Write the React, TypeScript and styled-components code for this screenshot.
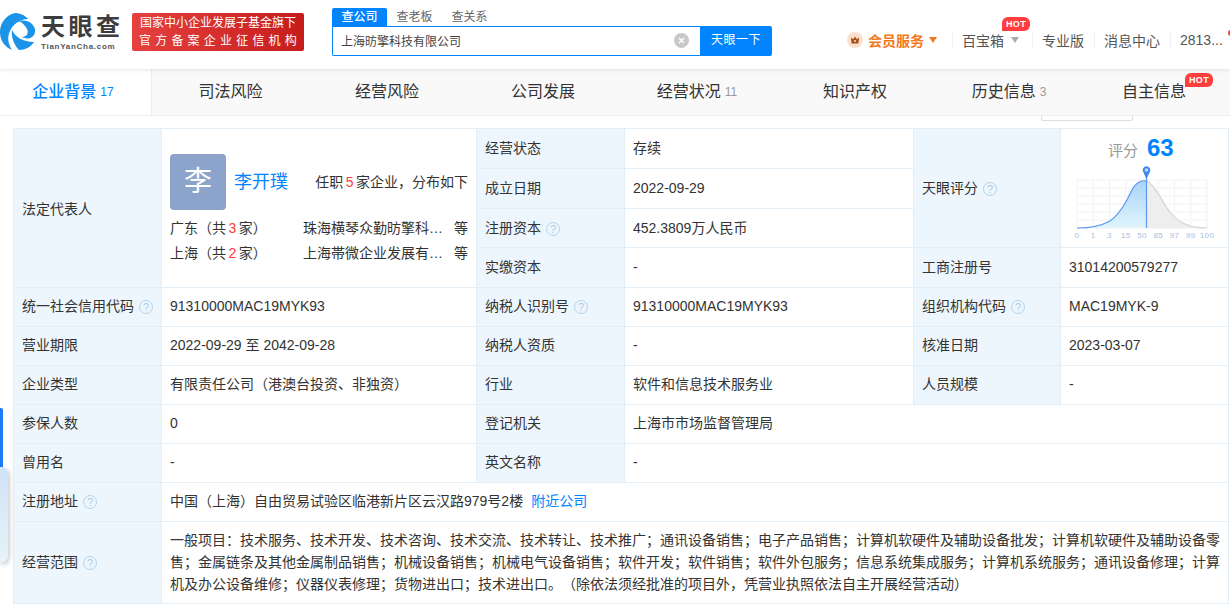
import React from 'react';
import styled, { createGlobalStyle } from 'styled-components';

const GlobalStyle = createGlobalStyle`
  html, body {
    margin: 0;
    padding: 0;
    height: 607px;
    overflow: hidden;
    background: #fff;
    color: #333;
    font-family: "Liberation Sans", "Noto Sans CJK SC", sans-serif;
    font-size: 14px;
    text-spacing-trim: space-all;
  }
`;

const Page = styled.div`
  position: relative;
  width: 1230px;
  height: 607px;
  overflow: hidden;
`;

const Header = styled.header`
  position: relative;
  z-index: 2;
  display: flex;
  align-items: flex-start;
  height: 69px;
  background: #fff;
  box-shadow: 0 1px 4px rgba(0, 0, 0, 0.1);
`;

const LogoBox = styled.div`
  display: flex;
  width: 132px;
  padding-top: 13px;
  flex: none;
`;

const LogoWords = styled.div`
  display: flex;
  flex-direction: column;
  margin-left: 5px;
`;

const LogoName = styled.div`
  font-size: 24px;
  line-height: 24px;
  height: 24px;
  margin-top: 2px;
  font-weight: 700;
  letter-spacing: 3.5px;
  color: #3d3d3d;
  white-space: nowrap;
`;

const LogoSub = styled.div`
  font-size: 8px;
  line-height: 11px;
  margin-top: 2px;
  font-weight: 700;
  letter-spacing: 0.72px;
  color: #555;
  white-space: nowrap;
`;

const Banner = styled.div`
  flex: none;
  width: 172px;
  height: 38px;
  margin-top: 13px;
  border-radius: 2px;
  background: linear-gradient(90deg, #e4413f, #c61c1c);
  color: #fff;
  display: flex;
  flex-direction: column;
  align-items: center;
  justify-content: center;
  font-size: 12px;
  line-height: 18px;
  white-space: nowrap;
`;

const BannerWide = styled.span`
  letter-spacing: 4.2px;
  margin-right: -4px;
`;

const SearchArea = styled.div`
  flex: none;
  width: 440px;
  margin: 8px 0 0 28px;
`;

const SearchTabs = styled.div`
  display: flex;
  height: 18px;
`;

const SearchTab = styled.div<{ $active?: boolean }>`
  font-size: 12px;
  line-height: 18px;
  text-align: center;
  ${(p) =>
    p.$active
      ? 'width: 55px; background: #0084ff; color: #fff; border-radius: 2px 2px 0 0; font-weight: 500;'
      : 'width: 55px; color: #666;'}
`;

const SearchRow = styled.div`
  display: flex;
  height: 30px;
`;

const SearchInput = styled.div`
  flex: 1;
  box-sizing: border-box;
  display: flex;
  align-items: center;
  justify-content: space-between;
  padding: 0 11px 0 8px;
  border: 1px solid #0084ff;
  border-right: 0;
  border-radius: 0 0 0 2px;
  font-size: 12px;
  color: #444;
`;

const SearchText = styled.span`
  margin-top: -2px;
`;

const SearchButton = styled.div`
  width: 72px;
  background: #0084ff;
  color: #fff;
  font-size: 12px;
  letter-spacing: 0.5px;
  line-height: 29px;
  text-align: center;
  border-radius: 0 2px 2px 0;
`;

const UserNav = styled.nav`
  flex: 1;
  display: flex;
  align-items: center;
  height: 18px;
  margin: 31px 0 0 75px;
  font-size: 14px;
  color: #555;
  white-space: nowrap;
`;

const VipLink = styled.div`
  display: flex;
  align-items: center;
  color: #f57a1c;
  font-weight: 700;
  gap: 5px;
  margin-right: 5px;
`;

const NavItem = styled.div`
  position: relative;
  display: flex;
  align-items: center;
  gap: 7px;
`;

const BoxItem = styled(NavItem)`
  margin-right: 3px;
`;

const NavSep = styled.i`
  width: 1px;
  height: 14px;
  background: #eee;
  margin: 0 9.5px;
  flex: none;
`;

const Caret = styled.i<{ $color: string }>`
  width: 0;
  height: 0;
  border-left: 4.5px solid transparent;
  border-right: 4.5px solid transparent;
  border-top: 6px solid ${(p) => p.$color};
`;

const HotBadge = styled.span`
  position: absolute;
  width: 28px;
  height: 14px;
  background: #ff3d3d;
  color: #fff;
  font-size: 9px;
  font-weight: 700;
  line-height: 14px;
  text-align: center;
  border-radius: 6px 6px 6px 0;
  letter-spacing: 0.3px;
`;

const BoxHot = styled(HotBadge)`
  top: -13px;
  left: 40px;
`;

const TabHot = styled(HotBadge)`
  top: 4px;
  left: 104px;
`;

const RedDot = styled.i`
  position: absolute;
  top: -2px;
  left: 48px;
  width: 6px;
  height: 6px;
  border-radius: 50%;
  background: #f04040;
`;

const TabBar = styled.div`
  position: relative;
  z-index: 1;
  display: flex;
  height: 47px;
  box-sizing: border-box;
  background: #f9f9f9;
  border-bottom: 1px solid #eee;
  overflow: hidden;
`;

const Tab = styled.div<{ $w: number; $active?: boolean }>`
  position: relative;
  flex: none;
  box-sizing: border-box;
  width: ${(p) => p.$w}px;
  padding-bottom: 4px;
  display: flex;
  align-items: center;
  justify-content: center;
  gap: 4px;
  font-size: 16px;
  color: ${(p) => (p.$active ? '#0084ff' : '#333')};
  font-weight: ${(p) => (p.$active ? 500 : 400)};
  background: ${(p) => (p.$active ? '#fff' : 'transparent')};
  ${(p) => (p.$active ? 'border-right: 1px solid #eee; padding-right: 5px;' : '')}
`;

const TabCount = styled.span<{ $active?: boolean }>`
  font-size: 12px;
  font-weight: 400;
  margin-top: 3px;
  color: ${(p) => (p.$active ? '#0084ff' : '#999')};
`;

const PeekBox = styled.div`
  position: absolute;
  top: 100px;
  left: 1041px;
  width: 90px;
  height: 19px;
  background: #fff;
  border: 1px solid #ddd;
  border-radius: 2px;
`;

const SideBar = styled.div`
  position: absolute;
  left: 0;
  top: 408px;
  width: 3px;
  height: 62px;
  background: #1f7cf6;
  border-radius: 0 2px 2px 0;
`;

const SideCard = styled.div`
  position: absolute;
  left: 0;
  top: 467px;
  width: 8px;
  height: 95px;
  background: linear-gradient(180deg, #cfe3f7, #e6f3f8);
  border-radius: 0 6px 6px 0;
  box-shadow: 1px 2px 5px rgba(0, 0, 0, 0.25);
`;

const Table = styled.table`
  table-layout: fixed;
  border-collapse: collapse;
  width: 1215px;
  margin: 12px 0 0 13px;
  font-size: 14px;
  line-height: 22px;
  color: #333;
`;

const Row = styled.tr<{ $h?: number }>`
  height: ${(p) => p.$h ?? 39}px;
`;

const Label = styled.td<{ $pad?: string }>`
  box-sizing: border-box;
  padding: ${(p) => p.$pad ?? '0 8px 2px'};
  background: #eef6fd;
  border: 1px solid #e4eef7;
  white-space: nowrap;
`;

const Value = styled.td<{ $pad?: string }>`
  box-sizing: border-box;
  padding: ${(p) => p.$pad ?? '0 8px 2px'};
  background: #fff;
  border: 1px solid #e4eef7;
`;

const Help = styled.span`
  display: inline-block;
  box-sizing: border-box;
  width: 14px;
  height: 14px;
  margin-left: 5px;
  border: 1px solid #b3d4ee;
  border-radius: 50%;
  color: #a9cce9;
  font-size: 11px;
  line-height: 12px;
  text-align: center;
  vertical-align: 0;
`;

const PersonCell = styled(Value)`
  vertical-align: top;
  padding-top: 25px;
`;

const Person = styled.div`
  display: flex;
  align-items: center;
`;

const Avatar = styled.div`
  flex: none;
  width: 56px;
  height: 56px;
  border-radius: 4px;
  background: #8ca3cc;
  color: #fff;
  font-size: 28px;
  line-height: 56px;
  text-align: center;
`;

const PersonName = styled.span`
  margin-left: 8px;
  font-size: 18px;
  color: #0084ff;
  white-space: nowrap;
`;

const Positions = styled.span`
  margin-left: auto;
  white-space: nowrap;
`;

const Red = styled.em`
  font-style: normal;
  margin: 0 2.5px;
  color: #ff3b3b;
`;

const Regions = styled.div`
  margin-top: 6px;
`;

const Region = styled.div`
  display: grid;
  grid-template-columns: 133px 141px 1fr;
  height: 25px;
  line-height: 25px;
  white-space: nowrap;
`;

const Company = styled.span`
  overflow: hidden;
  text-overflow: ellipsis;
`;

const Etc = styled.span`
  text-align: right;
`;

const Link = styled.a`
  margin-left: 8px;
  color: #0084ff;
`;

const ScoreHead = styled.div`
  display: flex;
  align-items: baseline;
  gap: 9px;
  color: #999;
  font-size: 15px;
  height: 26px;
  line-height: 26px;
  padding-left: 35px;
`;

const ScoreNum = styled.span`
  color: #0084ff;
  font-size: 24px;
  font-weight: 700;
`;

const ChartCell = styled(Value)`
  padding: 0;
  vertical-align: top;
`;

const ChartWrap = styled.div`
  padding: 6px 0 0 12px;
`;

const ChartSvg = styled.svg`
  display: block;
  margin-top: 3px;
`;

const LogoMark = () => (
  <svg width="36" height="38" viewBox="0 0 36 38" style={{ flex: 'none' }}>
    <path d="M15 0C6 2 0 10 0 19c0 9 5 15 12 18-4-6-5-13-2-19 3-7 10-12 18-12-3-4-9-6-13-6z" fill="#1a93e8" />
    <path d="M18 8c8-2 15 1 17 8 1 7-5 12-13 8 5 0 7-4 5-8-2-4-5-7-9-8z" fill="#1a93e8" />
    <path d="M12 17c3 7 11 12 22 12-3 5-9 8-15 8-5-5-8-13-7-20z" fill="#1a93e8" />
  </svg>
);

const ClearIcon = () => (
  <svg width="15" height="15" viewBox="0 0 15 15" style={{ marginTop: -2 }}>
    <circle cx="7.5" cy="7.5" r="7.5" fill="#c8c8c8" />
    <path d="M5 5l5 5M10 5l-5 5" stroke="#fff" strokeWidth="1.4" />
  </svg>
);

const CrownIcon = () => (
  <svg width="16" height="16" viewBox="0 0 16 16">
    <circle cx="8" cy="8" r="8" fill="#fbe1cd" />
    <path d="M3.8 5.6l2.3 1.7L8 4.4l1.9 2.9 2.3-1.7-.8 6H4.600z" fill="#a5531b" />
    <circle cx="8" cy="9" r="1" fill="#fbe1cd" />
  </svg>
);

const curve = 'M0 48C12 48 24 46 33 41C41 36 46 27 50 20C54 12 57 3 65 1C67 0.5 68 0.7 69.500 1';
const curveRight = 'M69.500 1C74 2 77 8 81 13C85 19 88 27 93 32C97 37 101 41 106 43C113 47 122 48 130 48';

const ScoreChart = () => {
  const labels = ['0', '1', '3', '15', '50', '85', '97', '99', '100'];
  return (
    <ChartSvg width="150" height="74" viewBox="-4 -16 150 74">
      <defs>
        <linearGradient id="blueArea" x1="0" y1="0" x2="0" y2="1">
          <stop offset="0" stopColor="#a8d3f7" />
          <stop offset="1" stopColor="#e0f5fc" />
        </linearGradient>
      </defs>
      {[0, 8, 16, 24, 32, 40, 48].map((y) => (
        <line key={y} x1="0" x2="130" y1={y} y2={y} stroke="#f2f2f2" />
      ))}
      {labels.map((l, i) => (
        <line key={l} x1={i * 16.25} x2={i * 16.25} y1="0" y2="48" stroke="#f2f2f2" />
      ))}
      <path d={`${curveRight}L130 48L69.500 48Z`} fill="#eeeeee" />
      <path d={curveRight} fill="none" stroke="#d4d4d4" strokeWidth="1.2" />
      <path d={`${curve}L69.500 48L0 48Z`} fill="url(#blueArea)" />
      <path d={curve} fill="none" stroke="#5a98f2" strokeWidth="1.2" />
      <line x1="69.500" x2="69.500" y1="-6" y2="48" stroke="#5a98f2" strokeWidth="1.2" />
      <path d="M69.500 -1L66 -8.500A3.800 3.800 0 1 1 73 -8.500Z" fill="#3f87ee" />
      <circle cx="69.500" cy="-10" r="1.800" fill="#bcd8fa" />
      {labels.map((l, i) => (
        <text
          key={l}
          x={i * 16.25}
          y="58"
          fontSize="8"
          letterSpacing="0.4"
          textAnchor="middle"
          fill="#a9bde0"
          fontFamily='"Liberation Sans", sans-serif'
        >
          {l}
        </text>
      ))}
    </ChartSvg>
  );
};

const App = () => {
  return (
    <Page>
      <GlobalStyle />
      <Header>
        <LogoBox>
          <LogoMark />
          <LogoWords>
            <LogoName>天眼查</LogoName>
            <LogoSub>TianYanCha.com</LogoSub>
          </LogoWords>
        </LogoBox>
        <Banner>
          <span>国家中小企业发展子基金旗下</span>
          <BannerWide>官方备案企业征信机构</BannerWide>
        </Banner>
        <SearchArea>
          <SearchTabs>
            <SearchTab $active>查公司</SearchTab>
            <SearchTab>查老板</SearchTab>
            <SearchTab>查关系</SearchTab>
          </SearchTabs>
          <SearchRow>
            <SearchInput>
              <SearchText>上海昉擎科技有限公司</SearchText>
              <ClearIcon />
            </SearchInput>
            <SearchButton>天眼一下</SearchButton>
          </SearchRow>
        </SearchArea>
        <UserNav>
          <VipLink>
            <CrownIcon />
            <span>会员服务</span>
            <Caret $color="#f57a1c" />
          </VipLink>
          <NavSep />
          <BoxItem>
            <span>百宝箱</span>
            <Caret $color="#aaa" />
            <BoxHot>HOT</BoxHot>
          </BoxItem>
          <NavSep />
          <NavItem>专业版</NavItem>
          <NavSep />
          <NavItem>消息中心</NavItem>
          <NavSep />
          <NavItem>
            2813...
            <RedDot />
          </NavItem>
        </UserNav>
      </Header>
      <TabBar>
        <Tab $w={152} $active>
          企业背景<TabCount $active>17</TabCount>
        </Tab>
        <Tab $w={157}>司法风险</Tab>
        <Tab $w={156}>经营风险</Tab>
        <Tab $w={156}>公司发展</Tab>
        <Tab $w={152}>
          经营状况<TabCount>11</TabCount>
        </Tab>
        <Tab $w={164}>知识产权</Tab>
        <Tab $w={144}>
          历史信息<TabCount>3</TabCount>
        </Tab>
        <Tab $w={146}>
          自主信息
          <TabHot>HOT</TabHot>
        </Tab>
      </TabBar>
      <PeekBox />
      <SideBar />
      <SideCard />
      <Table>
        <colgroup>
          <col width="148" />
          <col width="315" />
          <col width="148" />
          <col width="289" />
          <col width="147" />
          <col width="168" />
        </colgroup>
        <tbody>
          <Row $h={40}>
            <Label rowSpan={4} $pad="2px 8px 0">
              法定代表人
            </Label>
            <PersonCell rowSpan={4}>
              <Person>
                <Avatar>李</Avatar>
                <PersonName>李开璞</PersonName>
                <Positions>
                  任职<Red>5</Red>家企业，分布如下
                </Positions>
              </Person>
              <Regions>
                <Region>
                  <span>
                    广东（共<Red>3</Red>家）
                  </span>
                  <Company>珠海横琴众勤昉擎科技有限公司</Company>
                  <Etc>等</Etc>
                </Region>
                <Region>
                  <span>
                    上海（共<Red>2</Red>家）
                  </span>
                  <Company>上海帯微企业发展有限公司</Company>
                  <Etc>等</Etc>
                </Region>
              </Regions>
            </PersonCell>
            <Label>经营状态</Label>
            <Value>存续</Value>
            <Label rowSpan={3} $pad="0 8px">
              天眼评分<Help>?</Help>
            </Label>
            <ChartCell rowSpan={3}>
              <ChartWrap>
                <ScoreHead>
                  <span>评分</span>
                  <ScoreNum>63</ScoreNum>
                </ScoreHead>
                <ScoreChart />
              </ChartWrap>
            </ChartCell>
          </Row>
          <Row $h={40}>
            <Label>成立日期</Label>
            <Value>2022-09-29</Value>
          </Row>
          <Row $h={39}>
            <Label $pad="0 8px">
              注册资本<Help>?</Help>
            </Label>
            <Value $pad="0 8px">452.3809万人民币</Value>
          </Row>
          <Row $h={40}>
            <Label>实缴资本</Label>
            <Value>-</Value>
            <Label>工商注册号</Label>
            <Value>31014200579277</Value>
          </Row>
          <Row>
            <Label>
              统一社会信用代码<Help>?</Help>
            </Label>
            <Value>91310000MAC19MYK93</Value>
            <Label>
              纳税人识别号<Help>?</Help>
            </Label>
            <Value>91310000MAC19MYK93</Value>
            <Label>
              组织机构代码<Help>?</Help>
            </Label>
            <Value>MAC19MYK-9</Value>
          </Row>
          <Row>
            <Label>营业期限</Label>
            <Value>2022-09-29 至 2042-09-28</Value>
            <Label>纳税人资质</Label>
            <Value>-</Value>
            <Label>核准日期</Label>
            <Value>2023-03-07</Value>
          </Row>
          <Row>
            <Label>企业类型</Label>
            <Value>有限责任公司（港澳台投资、非独资）</Value>
            <Label>行业</Label>
            <Value>软件和信息技术服务业</Value>
            <Label>人员规模</Label>
            <Value>-</Value>
          </Row>
          <Row>
            <Label>参保人数</Label>
            <Value>0</Value>
            <Label>登记机关</Label>
            <Value colSpan={3}>上海市市场监督管理局</Value>
          </Row>
          <Row>
            <Label>曾用名</Label>
            <Value>-</Value>
            <Label>英文名称</Label>
            <Value colSpan={3}>-</Value>
          </Row>
          <Row>
            <Label>
              注册地址<Help>?</Help>
            </Label>
            <Value colSpan={5}>
              中国（上海）自由贸易试验区临港新片区云汉路979号2楼
              <Link>附近公司</Link>
            </Value>
          </Row>
          <Row $h={82}>
            <Label>
              经营范围<Help>?</Help>
            </Label>
            <Value colSpan={5}>
              一般项目：技术服务、技术开发、技术咨询、技术交流、技术转让、技术推广；通讯设备销售；电子产品销售；计算机软硬件及辅助设备批发；计算机软硬件及辅助设备零售；金属链条及其他金属制品销售；机械设备销售；机械电气设备销售；软件开发；软件销售；软件外包服务；信息系统集成服务；计算机系统服务；通讯设备修理；计算机及办公设备维修；仪器仪表修理；货物进出口；技术进出口。（除依法须经批准的项目外，凭营业执照依法自主开展经营活动）
            </Value>
          </Row>
        </tbody>
      </Table>
    </Page>
  );
};

export default App;
